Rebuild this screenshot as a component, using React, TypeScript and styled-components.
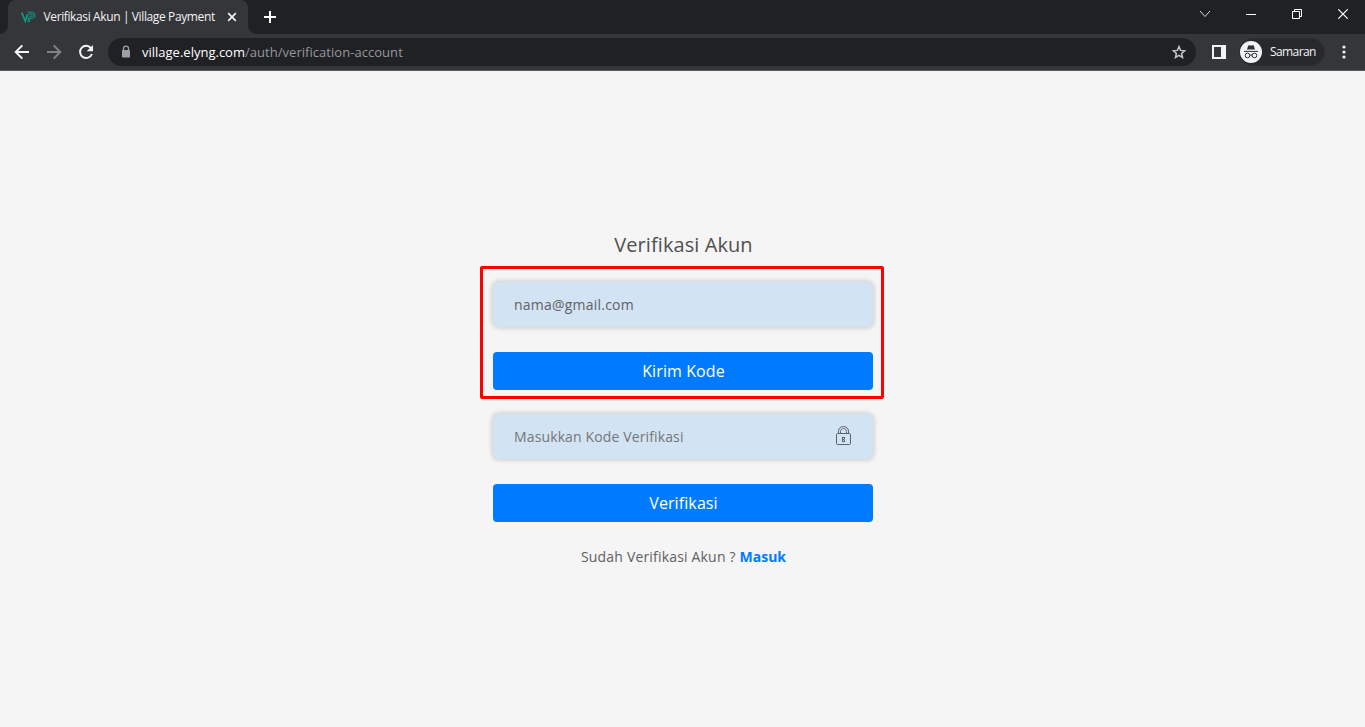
import React from "react";
import styled, { createGlobalStyle } from "styled-components";

const GlobalStyle = createGlobalStyle`
  *, *::before, *::after { box-sizing: border-box; }
  body { margin: 0; background: #f5f5f5; font-family: "Open Sans", "Noto Sans", sans-serif; }
  button, input { font-family: inherit; margin: 0; border: 0; }
  svg { display: block; flex: none; }
`;

const Window = styled.div`
  width: 100%;
  height: 727px;
  display: flex;
  flex-direction: column;
  overflow: hidden;
`;

const TabStrip = styled.header`
  height: 34px;
  flex: none;
  display: flex;
  align-items: flex-end;
  background: #202124;
  padding-left: 8px;
`;

const Tab = styled.div`
  position: relative;
  width: 240px;
  height: 34px;
  display: flex;
  align-items: center;
  padding-left: 13px;
  border-radius: 8px 8px 0 0;
  background: #35363a;
  &::before, &::after {
    content: "";
    position: absolute;
    bottom: 0;
    width: 8px;
    height: 8px;
  }
  &::before { left: -8px; background: radial-gradient(circle at 0 0, #202124 7.5px, #35363a 8px); }
  &::after { right: -8px; background: radial-gradient(circle at 100% 0, #202124 7.5px, #35363a 8px); }
`;

const TabTitle = styled.span`
  flex: none;
  margin-left: 7.5px;
  width: 176.5px;
  white-space: nowrap;
  font-size: 12px;
  line-height: 34px;
  letter-spacing: -0.38px;
  color: #f1f3f4;
`;

const IconButton = styled.button<{ $w: number; $h?: number }>`
  flex: none;
  width: ${(p) => p.$w}px;
  height: ${(p) => p.$h ?? 28}px;
  padding: 0;
  display: flex;
  align-items: center;
  justify-content: center;
  background: transparent;
`;

const CaptionButtons = styled.div`
  margin-left: auto;
  display: flex;
  height: 34px;
`;

const Toolbar = styled.div`
  height: 37px;
  flex: none;
  display: flex;
  align-items: center;
  padding-left: 6px;
  background: #35363a;
  border-bottom: 1px solid #5b5a5f;
`;

const AddressBar = styled.div`
  flex: none;
  width: 1088px;
  height: 28px;
  margin-left: 6px;
  padding: 0 8px 0 12px;
  display: flex;
  align-items: center;
  border-radius: 14px;
  background: #202124;
`;

const Url = styled.span`
  flex: 1;
  margin-left: 10px;
  font-size: 13px;
  line-height: 28px;
  white-space: nowrap;
  color: #fff;
  letter-spacing: 0;
`;

const UrlPath = styled.span`
  color: #96989c;
  letter-spacing: 0.04px;
`;

const Profile = styled.div`
  flex: none;
  width: 86px;
  height: 28px;
  margin-left: -3px;
  display: flex;
  align-items: center;
  border-radius: 14px;
  border: 1px solid #2b2c2f;
  background: #28292c;
  color: #f1f3f4;
  font-size: 12px;
  letter-spacing: -0.6px;
`;

const ProfileName = styled.span`
  margin-left: 8px;
  line-height: 26px;
`;

const Page = styled.main`
  flex: 1;
  display: flex;
  flex-direction: column;
  align-items: center;
  padding-top: 159px;
  background: #f5f5f5;
`;

const Title = styled.h1`
  margin: 0;
  padding-left: 2px;
  font-size: 20px;
  font-weight: 400;
  line-height: 30px;
  letter-spacing: 0.08px;
  color: #505050;
`;

const Form = styled.form`
  width: 380px;
  margin-top: 22px;
  display: flex;
  flex-direction: column;
  gap: 24px;
`;

const Step = styled.section<{ $outlined?: boolean }>`
  position: relative;
  display: flex;
  flex-direction: column;
  gap: 25px;
  &::after {
    content: "";
    display: ${(p) => (p.$outlined ? "block" : "none")};
    position: absolute;
    inset: -16px -11px -9px -13px;
    border: 3px solid #ff0000;
    border-radius: 2px;
    pointer-events: none;
  }
`;

const Field = styled.label`
  height: 45px;
  padding: 0 21px;
  display: flex;
  align-items: center;
  border-radius: 6px;
  background: #d2e3f3;
  box-shadow: 0 0 5px 1px rgba(0, 0, 0, 0.18);
`;

const Input = styled.input`
  flex: 1;
  min-width: 0;
  height: 45px;
  padding: 0 0 1px 0.5px;
  outline: 0;
  background: transparent;
  font-size: 14px;
  letter-spacing: 0.22px;
  color: #5f6164;
  &::placeholder { color: #757678; opacity: 1; letter-spacing: 0.13px; }
`;

const SubmitButton = styled.button`
  height: 38px;
  padding: 0 0 0 2px;
  border-radius: 4px;
  background: #007bff;
  color: #fff;
  font-size: 16px;
  line-height: 38px;
  letter-spacing: 0.1px;
`;

const Footer = styled.p`
  margin: 24px 0 0;
  padding-left: 2px;
  font-size: 14px;
  line-height: 22px;
  letter-spacing: 0.18px;
  color: #606060;
`;

const LoginLink = styled.a`
  font-weight: 700;
  letter-spacing: 0;
  color: #007bff;
  text-decoration: none;
`;

const Favicon = () => (
  <svg width="15" height="12" viewBox="0 0 15 12" fill="none" stroke="#0d9b84">
    <path d="M.7 1.5 4.3 10 6.6 3.2" strokeWidth="1.8" />
    <path d="M6.5 1.2h5c3.3 0 3.3 4 0 4h-3M7.5 3.2h5M8.3 7.3h3.2c3 0 3-3.2 1-3.4M8 5.4 6.8 10.8h1.5l.9-3.4" strokeWidth="1" />
  </svg>
);

const CloseIcon = () => (
  <svg width="10" height="10" viewBox="0 0 10 10" stroke="#f1f3f4" strokeWidth="1.7">
    <path d="m1.2 1.2 7.6 7.6m0-7.6L1.2 8.8" />
  </svg>
);

const PlusIcon = () => (
  <svg width="12" height="12" viewBox="0 0 12 12" stroke="#fff" strokeWidth="2">
    <path d="M6 0v12M0 6h12" />
  </svg>
);

const ArrowIcon = ({ color, flipped }: { color: string; flipped?: boolean }) => (
  <svg width="16" height="16" viewBox="0 0 16 16" fill="none" stroke={color} strokeWidth="2">
    <path d={flipped ? "M1 8h13M7.7 1.4 14.3 8l-6.6 6.6" : "M15 8H2M8.3 1.4 1.7 8l6.6 6.6"} />
  </svg>
);

const ReloadIcon = () => (
  <svg width="16" height="16" viewBox="0 0 16 16">
    <path d="M13.2 4.4A6.1 6.1 0 1 0 13.9 10" fill="none" stroke="#f1f3f4" strokeWidth="2" />
    <path d="M15 1v6.3H8.7z" fill="#f1f3f4" />
  </svg>
);

const PadlockIcon = () => (
  <svg width="12" height="14" viewBox="0 0 12 14">
    <path d="M3.5 6V3.7a2.5 2.5 0 0 1 5 0V6" fill="none" stroke="#9aa0a6" strokeWidth="1.3" />
    <rect x="2" y="5" width="8" height="7.5" rx=".8" fill="#9aa0a6" />
  </svg>
);

const StarIcon = () => (
  <svg width="16" height="16" viewBox="0 0 16 16" fill="none" stroke="#c4c7ca" strokeWidth="1.5">
    <path d="m8 2.6 1.6 3.8 4 .4-3 2.7.9 4L8 11.4l-3.5 2.1.9-4-3-2.7 4-.4z" />
  </svg>
);

const SidePanelIcon = () => (
  <svg width="14" height="14" viewBox="0 0 14 14">
    <path d="M0 0h14v14H0zM2 2v10h7V2z" fill="#f1f3f4" fillRule="evenodd" />
  </svg>
);

const IncognitoIcon = () => (
  <svg width="22" height="22" viewBox="0 0 22 22">
    <circle cx="11" cy="11" r="11" fill="#f1f3f4" />
    <path d="M7 8.5 8.2 4.6l1.3-.3 1.5.4 1.5-.4 1.3.3L15 8.5z" fill="#303135" />
    <path d="M4 10.4h14" stroke="#303135" strokeWidth="1" />
    <g fill="none" stroke="#303135" strokeWidth="1">
      <circle cx="7.5" cy="14.5" r="2.3" />
      <circle cx="14.5" cy="14.5" r="2.3" />
      <path d="M9.8 14.3q1.2-.7 2.4 0" />
    </g>
  </svg>
);

const MenuIcon = () => (
  <svg width="4" height="14" viewBox="0 0 4 14" fill="#f1f3f4">
    <circle cx="2" cy="2" r="1.6" />
    <circle cx="2" cy="7" r="1.6" />
    <circle cx="2" cy="12" r="1.6" />
  </svg>
);

const CodeLockIcon = () => (
  <svg width="16" height="22" viewBox="0 0 16 22" fill="none" stroke="#606367">
    <rect x=".5" y="7.5" width="14" height="11" rx="1.2" />
    <path d="M2.5 7V5.2C2.5 2.4 4.6.5 7.5.5s5 1.9 5 4.7V7M4.5 7V5.5c0-1.7 1.2-3 3-3s3 1.3 3 3V7" />
    <path d="M6.5 11v4.5M6 11.5h3M6 13.5h2.5M6 15.5h3M8.5 11v2m0 1v2" />
  </svg>
);

export default function App() {
  return (
    <Window>
      <GlobalStyle />
      <TabStrip>
        <Tab>
          <Favicon />
          <TabTitle>Verifikasi Akun | Village Payment</TabTitle>
          <IconButton $w={24} aria-label="Tutup tab"><CloseIcon /></IconButton>
        </Tab>
        <IconButton $w={44} $h={34} aria-label="Tab baru"><PlusIcon /></IconButton>
        <CaptionButtons>
          <IconButton $w={46} aria-label="Cari tab">
            <svg width="12" height="8" viewBox="0 0 12 8" fill="none" stroke="#d8d9da"><path d="m1 1 5 5.5L11 1" /></svg>
          </IconButton>
          <IconButton $w={46} aria-label="Minimalkan">
            <svg width="10" height="1" viewBox="0 0 10 1"><path d="M0 0h10v1H0z" fill="#fff" /></svg>
          </IconButton>
          <IconButton $w={46} aria-label="Pulihkan">
            <svg width="10" height="10" viewBox="0 0 10 10" fill="none" stroke="#fff"><path d="M.5 2.5h7v7h-7zM2.5 2.5v-2h7v7h-2" /></svg>
          </IconButton>
          <IconButton $w={45} aria-label="Tutup">
            <svg width="10" height="10" viewBox="0 0 10 10" stroke="#fff" strokeWidth="1.2"><path d="m.3.3 9.4 9.4m0-9.4L.3 9.7" /></svg>
          </IconButton>
        </CaptionButtons>
      </TabStrip>
      <Toolbar>
        <IconButton $w={32} aria-label="Kembali"><ArrowIcon color="#f1f3f4" /></IconButton>
        <IconButton $w={32} aria-label="Maju"><ArrowIcon color="#818286" flipped /></IconButton>
        <IconButton $w={32} aria-label="Muat ulang"><ReloadIcon /></IconButton>
        <AddressBar>
          <PadlockIcon />
          <Url>village.elyng.com<UrlPath>/auth/verification-account</UrlPath></Url>
          <IconButton $w={18} aria-label="Bookmark"><StarIcon /></IconButton>
        </AddressBar>
        <IconButton $w={46} aria-label="Panel samping"><SidePanelIcon /></IconButton>
        <Profile><IncognitoIcon /><ProfileName>Samaran</ProfileName></Profile>
        <IconButton $w={38} aria-label="Menu"><MenuIcon /></IconButton>
      </Toolbar>
      <Page>
        <Title>Verifikasi Akun</Title>
        <Form onSubmit={(e) => e.preventDefault()}>
          <Step $outlined>
            <Field><Input type="text" defaultValue="nama@gmail.com" aria-label="Email" /></Field>
            <SubmitButton type="button">Kirim Kode</SubmitButton>
          </Step>
          <Step>
            <Field><Input type="text" placeholder="Masukkan Kode Verifikasi" /><CodeLockIcon /></Field>
            <SubmitButton type="submit">Verifikasi</SubmitButton>
          </Step>
        </Form>
        <Footer>Sudah Verifikasi Akun ? <LoginLink href="#">Masuk</LoginLink></Footer>
      </Page>
    </Window>
  );
}
